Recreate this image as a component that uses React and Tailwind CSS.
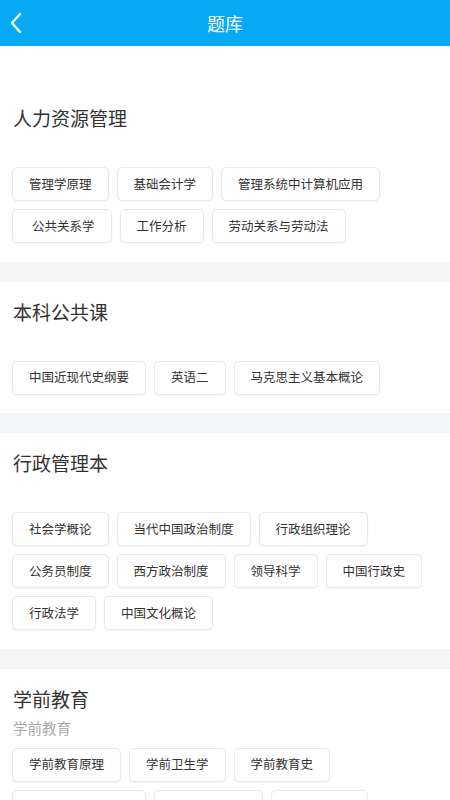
import React from 'react';

const sections = [
  {
    title: '人力资源管理',
    top: true,
    rows: [
      ['管理学原理', '基础会计学', '管理系统中计算机应用'],
      ['公共关系学', '工作分析', '劳动关系与劳动法'],
    ],
  },
  {
    title: '本科公共课',
    rows: [['中国近现代史纲要', '英语二', '马克思主义基本概论']],
  },
  {
    title: '行政管理本',
    rows: [
      ['社会学概论', '当代中国政治制度', '行政组织理论'],
      ['公务员制度', '西方政治制度', '领导科学', '中国行政史'],
      ['行政法学', '中国文化概论'],
    ],
  },
  {
    title: '学前教育',
    subtitle: '学前教育',
    rows: [
      ['学前教育原理', '学前卫生学', '学前教育史'],
      ['学前儿童发展心理', '学前比较教育', '学前心理学'],
    ],
  },
];

// this one is a bit wider in the app
const wide = ['公共关系学'];

const Chip = ({ label }) => (
  <div
    className={`h-[34px] flex items-center border border-[#e9e9e9] rounded-[5px] bg-white shadow-[0_1px_2px_rgba(0,0,0,0.05)] text-[12.5px] text-[#333] whitespace-nowrap ${
      wide.includes(label) ? 'pl-[19px] pr-[16px]' : 'px-4'
    }`}
  >
    {label}
  </div>
);

const Section = ({ section }) => (
  <div className={`bg-white px-[13px] pb-[18.5px] ${section.top ? 'pt-[58px]' : 'pt-4'}`}>
    <div className="h-7 leading-7 text-[19px] text-[#333]">{section.title}</div>
    <div className="mt-[5px] h-5 leading-5 text-[14.5px] text-[#aaa]">{section.subtitle}</div>
    <div className="mt-[10px] flex flex-col gap-2 -ml-px">
      {section.rows.map((row, i) => (
        <div key={i} className="flex gap-2">
          {row.map((label) => (
            <Chip key={label} label={label} />
          ))}
        </div>
      ))}
    </div>
  </div>
);

const App = () => {
  return (
    <div className="w-[450px] min-h-screen bg-[#f4f5f7] font-['Noto_Sans_CJK_SC',sans-serif]">
      <div className="h-[46px] bg-[#05a9f4] flex items-center relative">
        <svg className="ml-[9px]" width="14" height="22" viewBox="0 0 14 22" fill="none">
          <polyline points="11,2 3,11 11,20" stroke="white" strokeWidth="2.4" strokeLinecap="round" strokeLinejoin="round" />
        </svg>
        <div className="absolute inset-0 flex items-center justify-center text-white text-[18px]">题库</div>
      </div>
      <div className="flex flex-col gap-5">
        {sections.map((s) => (
          <Section key={s.title} section={s} />
        ))}
      </div>
    </div>
  );
};

export default App;
